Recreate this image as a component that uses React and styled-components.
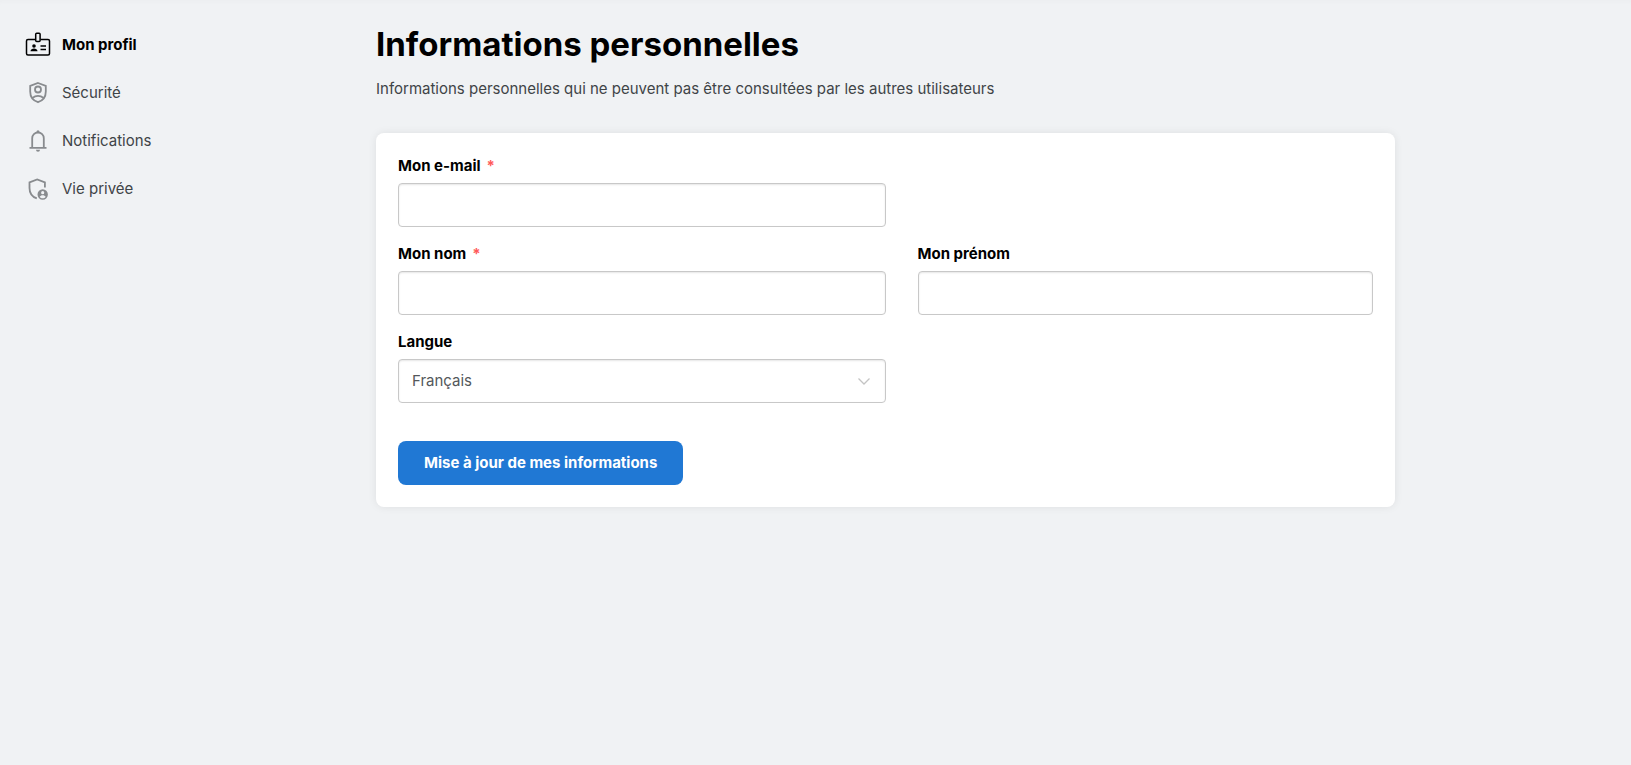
import React from "react";
import styled, { createGlobalStyle } from "styled-components";

const GlobalStyle = createGlobalStyle`
  * {
    box-sizing: border-box;
  }

  body {
    margin: 0;
    background: #f0f2f4;
    color: #000000;
    font-family: Inter, "Liberation Sans", sans-serif;
    font-size: 15px;
    line-height: 24px;
  }
`;

const Page = styled.div`
  display: flex;
  min-height: 100vh;
  padding: 0 24px;
  box-shadow: inset 0 4px 4px -2px rgba(0, 0, 0, 0.02);

  @media screen and (max-width: 800px) {
    flex-direction: column;
  }
`;

const Sidebar = styled.nav`
  flex: 0 0 352px;
  padding-top: 31px;

  @media screen and (max-width: 800px) {
    flex: none;
  }
`;

const MenuList = styled.ul`
  display: flex;
  flex-direction: column;
  gap: 20px;
  margin: 0;
  padding: 0;
  list-style: none;
`;

const MenuLink = styled.a`
  display: flex;
  align-items: center;
  gap: 10px;
  width: fit-content;
  color: ${(props) => (props.$active ? "#000000" : "#3f4447")};
  font-weight: ${(props) => (props.$active ? 700 : 400)};
  text-decoration: none;
`;

const MenuIcon = styled.svg`
  width: 28px;
  height: 28px;
  color: ${(props) => (props.$active ? "#000000" : "#888b8e")};
  fill: none;
  stroke: currentColor;
  stroke-width: ${(props) => (props.$active ? 1.5 : 1.8)};
`;

const Main = styled.main`
  flex: 1;
  min-width: 0;
  max-width: 1019px;
  padding: 24px 0;
`;

const Title = styled.h1`
  margin: 0 0 13px;
  font-size: 33px;
  font-weight: 700;
  line-height: 40px;
`;

const Subtitle = styled.p`
  margin: 0 0 32px;
  color: #3f4447;
`;

const Card = styled.form`
  padding: 22px;
  border-radius: 8px;
  background: #ffffff;
  box-shadow: 0 0 8px rgba(0, 0, 0, 0.08);
`;

const Row = styled.div`
  display: grid;
  grid-template-columns: 1fr 1fr;
  margin-bottom: 16px;

  @media screen and (max-width: 800px) {
    grid-template-columns: 1fr;
  }
`;

const Field = styled.div`
  display: flex;
  flex-direction: column;
  gap: 6px;
  padding-left: ${(props) => (props.$second ? "32px" : "0")};

  @media screen and (max-width: 800px) {
    padding-left: 0;
  }
`;

const Label = styled.label`
  font-weight: 700;
  line-height: 22px;
`;

const Required = styled.span`
  margin-left: 6px;
  color: #ff5a5a;
`;

const Input = styled.input`
  width: 100%;
  height: 44px;
  padding: 0 13px;
  border: 1px solid #c8c8c8;
  border-radius: 4px;
  background: #ffffff;
  box-shadow: inset 0 1px 2px rgba(0, 0, 0, 0.1);
  color: #54585b;
  font: inherit;
`;

const SelectWrapper = styled.div`
  position: relative;
`;

const Select = styled(Input)`
  appearance: none;
`;

const Chevron = styled.svg`
  position: absolute;
  top: 16px;
  right: 16px;
  width: 12px;
  height: 12px;
  fill: none;
  stroke: #c4c4c4;
  stroke-width: 1.3;
  pointer-events: none;
`;

const SubmitButton = styled.button`
  height: 44px;
  margin-top: 22px;
  padding: 0 26px;
  border: none;
  border-radius: 8px;
  background: #2078d4;
  color: #ffffff;
  font: inherit;
  font-weight: 700;
  cursor: pointer;
`;

function BadgeIcon() {
  return (
    <MenuIcon $active viewBox="0 0 28 28" aria-hidden="true">
      <path d="M11.5 8.5H4A1.5 1.5 0 0 0 2.5 10v12.5A1.5 1.5 0 0 0 4 24h20a1.5 1.5 0 0 0 1.500-1.500V10A1.5 1.5 0 0 0 24 8.500h-7.500" />
      <rect x="11.7" y="2.2" width="4.4" height="8.2" rx="1" />
      <circle cx="10" cy="15" r="1.8" fill="currentColor" stroke="none" />
      <path d="M6.5 20.2c0-2 1.8-2.8 3.5-2.8s3.5.8 3.5 2.8z" fill="currentColor" stroke="none" />
      <path d="M16.5 15h5.500M16.500 18.5h5.500" strokeWidth="1.3" />
    </MenuIcon>
  );
}

function ShieldPersonIcon() {
  return (
    <MenuIcon viewBox="0 0 28 28" aria-hidden="true">
      <path d="M14 4l7.800 2.900v5.700c0 5.200-3 9.200-7.800 10.600c-4.800-1.400-7.800-5.400-7.800-10.600V6.900z" />
      <circle cx="14" cy="10.5" r="3" />
      <path d="M8.3 19c3.500-2.600 7.900-2.600 11.400 0" />
    </MenuIcon>
  );
}

function BellIcon() {
  return (
    <MenuIcon viewBox="0 0 28 28" aria-hidden="true">
      <path d="M5.500 20.800h17M8.200 20.800v-9.500a5.800 5.800 0 0 1 11.600 0v9.500" />
      <path d="M12.500 6V4.700a1.500 1.500 0 0 1 3 0V6z" fill="currentColor" stroke="none" />
      <path d="M12 22.700h4a2 2 0 0 1-4 0z" fill="currentColor" stroke="none" />
    </MenuIcon>
  );
}

function PrivacyIcon() {
  return (
    <MenuIcon viewBox="0 0 28 28" aria-hidden="true">
      <path d="M12.800 23.300c-4.600-1.500-7.300-5.500-7.300-10.400V7.300L13.200 4.500l7.700 2.800v5.200" />
      <path
        d="M18.700 14.300a5.200 5.200 0 1 0 0 10.400a5.200 5.200 0 0 0 0-10.400zM18.700 16.100a1.600 1.600 0 1 1 0 3.200a1.600 1.600 0 0 1 0-3.200zM18.700 20.300c1.300 0 2.400.6 3 1.500c-.7 1-1.800 1.500-3 1.500s-2.300-.5-3-1.500c.6-.9 1.700-1.500 3-1.500z"
        fill="currentColor"
        fillRule="evenodd"
        stroke="none"
      />
    </MenuIcon>
  );
}

const menu = [
  { label: "Mon profil", icon: BadgeIcon, active: true },
  { label: "Sécurité", icon: ShieldPersonIcon },
  { label: "Notifications", icon: BellIcon },
  { label: "Vie privée", icon: PrivacyIcon },
];

export default function App() {
  return (
    <>
      <GlobalStyle />
      <Page>
        <Sidebar>
          <MenuList>
            {menu.map(({ label, icon: Icon, active }) => (
              <li key={label}>
                <MenuLink href="#" $active={active} aria-current={active ? "page" : undefined}>
                  <Icon />
                  {label}
                </MenuLink>
              </li>
            ))}
          </MenuList>
        </Sidebar>
        <Main>
          <Title>Informations personnelles</Title>
          <Subtitle>
            Informations personnelles qui ne peuvent pas être consultées par les autres utilisateurs
          </Subtitle>
          <Card onSubmit={(e) => e.preventDefault()}>
            <Row>
              <Field>
                <Label htmlFor="email">
                  Mon e-mail<Required>*</Required>
                </Label>
                <Input id="email" type="email" required />
              </Field>
            </Row>
            <Row>
              <Field>
                <Label htmlFor="lastname">
                  Mon nom<Required>*</Required>
                </Label>
                <Input id="lastname" type="text" required />
              </Field>
              <Field $second>
                <Label htmlFor="firstname">Mon prénom</Label>
                <Input id="firstname" type="text" />
              </Field>
            </Row>
            <Row>
              <Field>
                <Label htmlFor="language">Langue</Label>
                <SelectWrapper>
                  <Select as="select" id="language" defaultValue="fr">
                    <option value="fr">Français</option>
                  </Select>
                  <Chevron viewBox="0 0 12 12" aria-hidden="true">
                    <path d="M0.500 3.500L6 9l5.500-5.500" />
                  </Chevron>
                </SelectWrapper>
              </Field>
            </Row>
            <SubmitButton type="submit">Mise à jour de mes informations</SubmitButton>
          </Card>
        </Main>
      </Page>
    </>
  );
}
